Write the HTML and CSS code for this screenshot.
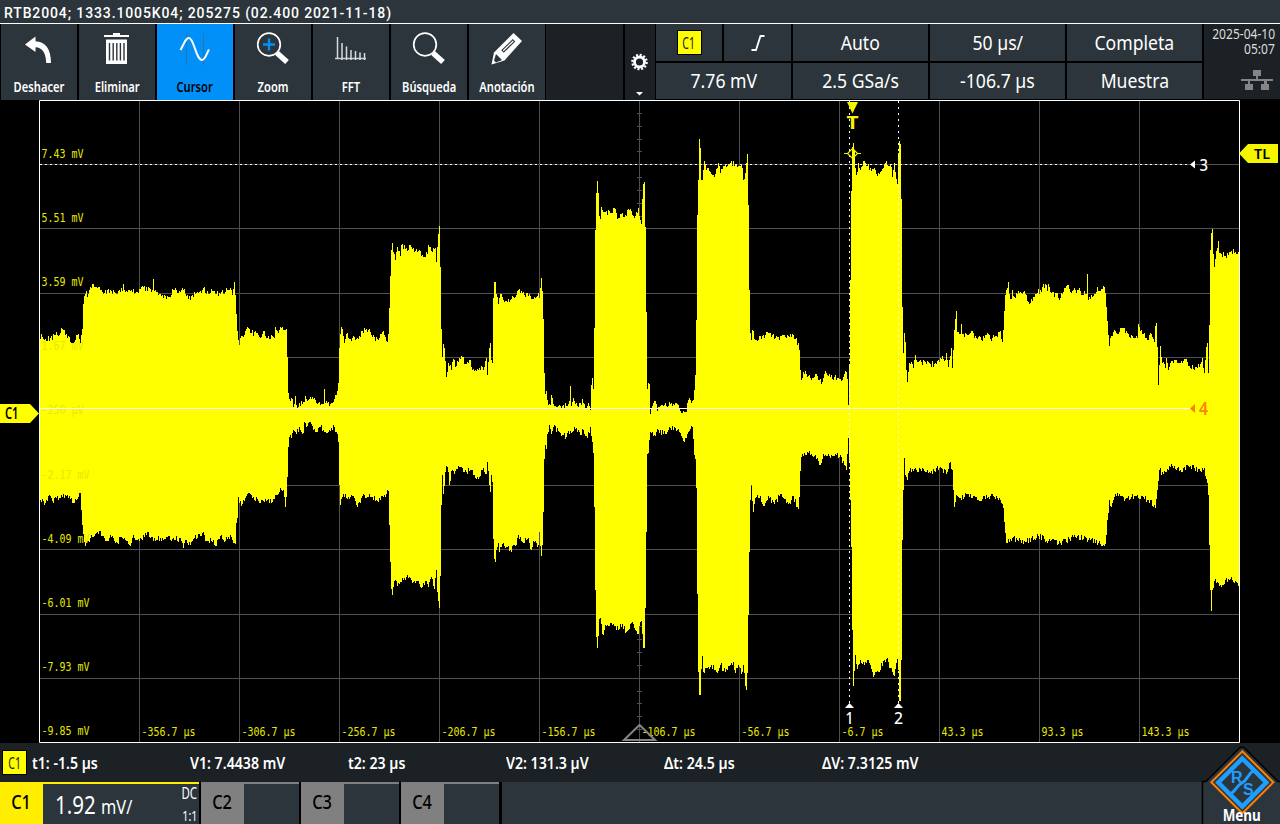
FILE: index.html
```html
<!DOCTYPE html>
<html lang="es">
<head>
<meta charset="utf-8">
<title>RTB2004</title>
<link rel="stylesheet" href="styles.css">
</head>
<body>
<div class="screen">
  <header class="title"><span>RTB2004; 1333.1005K04; 205275 (02.400 2021-11-18)</span></header>

  <nav class="toolbar">
    <div class="tool">
      <svg class="icon" viewBox="0 0 40 40"><path d="M6 17.5 16.5 9.5V14.2C26 14.5 32 21.500 32 36H27.200C27 26.500 23.500 20.500 16.500 20.300V25Z" fill="#fff"/></svg>
      <span>Deshacer</span>
    </div>
    <div class="tool">
      <svg class="icon" viewBox="0 0 40 40"><path d="M7 8h9V6h7v2h9v2H7zM9 12.500h21V37H9z" fill="#fff"/><path d="M12.500 16v17.500M16.200 16v17.500M19.800 16v17.500M23.400 16v17.500M27 16v17.500" stroke="#2b353b" stroke-width="1.400"/></svg>
      <span>Eliminar</span>
    </div>
    <div class="tool active">
      <svg class="icon" viewBox="0 0 40 40"><path d="M11.500 6.500v31M28.500 6.500v31" stroke="#4d5c66" stroke-dasharray="1 1" fill="none"/><path d="M5.500 23C9.500 16 10.500 11 14 11C19 11 21 33 27 33C30 33 31 28 34 22.500" stroke="#fff" stroke-width="2" fill="none"/></svg>
      <span>Cursor</span>
    </div>
    <div class="tool">
      <svg class="icon" viewBox="0 0 40 40"><circle cx="16" cy="17.500" r="11.300" fill="none" stroke="#fff" stroke-width="1.700"/><path d="m24 26 10 9" stroke="#fff" stroke-width="5.500"/><path d="M16 11.500v12M10 17.500h12" stroke="#0090f8" stroke-width="2.400"/></svg>
      <span>Zoom</span>
    </div>
    <div class="tool">
      <svg class="icon" viewBox="0 0 40 40"><path d="M4 31.500h31" stroke="#ccd0d2" stroke-width="1.500"/><path d="M6.500 10v22M11 16v17M15.500 19.500V33M20 23v10M24.500 24v9M29 25.500V33M33.500 26v7" stroke="#d8dcde" stroke-width="1.500"/></svg>
      <span>FFT</span>
    </div>
    <div class="tool">
      <svg class="icon" viewBox="0 0 40 40"><circle cx="16" cy="17.500" r="11.300" fill="none" stroke="#fff" stroke-width="1.700"/><path d="m24 26 10 9" stroke="#fff" stroke-width="5.500"/></svg>
      <span>Búsqueda</span>
    </div>
    <div class="tool">
      <svg class="icon" viewBox="0 0 40 40"><path d="M26.500 6 35 14 17.500 33.500 4.500 37.500 7 25.500Z" fill="#fff"/><path d="m9 27 6 6-6 2.500-2-2Z" fill="#2b353b"/><path d="M15.500 24.500 27 13.300" stroke="#2b353b" stroke-width="3.600"/><path d="M16.200 23.800 26.300 14" stroke="#fff" stroke-width="1.200"/></svg>
      <span>Anotación</span>
    </div>
    <div class="spacer"></div>
    <div class="gear">
      <svg viewBox="0 0 30 75"><circle cx="14.500" cy="38" r="5" fill="none" stroke="#fff" stroke-width="2.800"/><circle cx="14.500" cy="38" r="7.200" fill="none" stroke="#fff" stroke-width="2.200" stroke-dasharray="2 1.770"/><path d="M11 68h7l-3.500 3.500z" fill="#fff"/></svg>
    </div>
    <section class="status">
      <div class="pair">
        <div class="cell"><b class="badge"><i>C1</i></b></div>
        <div class="cell"><svg class="edge" viewBox="0 0 14 18"><path d="M.500 16H5L9.500 2H13.500" fill="none" stroke="#fff" stroke-width="1.800"/></svg></div>
      </div>
      <div class="cell"><span>Auto</span></div>
      <div class="cell"><span>50 µs/</span></div>
      <div class="cell"><span>Completa</span></div>
      <div class="cell"><span>7.76 mV</span></div>
      <div class="cell"><span>2.5 GSa/s</span></div>
      <div class="cell"><span>-106.7 µs</span></div>
      <div class="cell"><span>Muestra</span></div>
    </section>
    <aside class="clock">
      <span>2025-04-10</span>
      <span>05:07</span>
      <svg viewBox="0 0 32 20"><path d="M12 0h8v6h-3v3h15v2h-6v3h2v6h-8v-6h3v-3H9v3h3v6H4v-6h3v-3H0V9h15V6h-3z" fill="#858585"/></svg>
    </aside>
  </nav>

  <main class="plot">
    <svg id="plot" viewBox="0 100 1280 643" width="1280" height="643">
      <g id="grid" fill="#505050"></g>
      <path id="wave" fill="#ffff00"/>
      <g id="labels" class="axis"></g>
      <path d="M639.500 725 624 740h31z" fill="none" stroke="#858585" stroke-width="2"/>
      <path d="M39.500 100.500h1200v642H39.500z" fill="none" stroke="#fff"/>
      <path d="M40 164.500h1150" stroke="#fff" stroke-dasharray="2 3"/>
      <path d="M40 408.500h1150" stroke="#fff"/>
      <path d="M849.500 101v603M898.500 101v603" stroke="#fff" stroke-dasharray="2 4"/>
      <path d="M1190 164.500l5-4v8zM849.500 703l4.500 5h-9zM898.500 703l4.500 5h-9z" fill="#fff"/>
      <path d="M1190 408.500l5-4.500v9z" fill="#ff8000"/>
      <g class="marker">
        <text x="1199.500" y="171" textLength="8.500" lengthAdjust="spacingAndGlyphs">3</text>
        <text x="1199" y="415" textLength="9" lengthAdjust="spacingAndGlyphs" class="orange">4</text>
        <text x="845.500" y="724" textLength="8" lengthAdjust="spacingAndGlyphs">1</text>
        <text x="894" y="724" textLength="9" lengthAdjust="spacingAndGlyphs">2</text>
      </g>
      <path d="M847 102h11l-5.500 11.500z" fill="#f5f500"/>
      <text class="trig" x="846.500" y="129" textLength="12" lengthAdjust="spacingAndGlyphs">T</text>
      <path d="M852.500 148.500l5 5-5 5-5-5zM844 153.500h3.500M857.500 153.500h3.500" fill="none" stroke="#f5f500" stroke-width="1.200"/>
      <path d="M0 404h30l9 9.500-9 9.500H0z" fill="#ffff00"/>
      <text class="tag" x="5" y="419" textLength="13.500" lengthAdjust="spacingAndGlyphs">C1</text>
      <path d="M1239 153.500l9-9.500h30v19h-30z" fill="#f5f500"/>
      <text class="tag tl" x="1254" y="159" textLength="16" lengthAdjust="spacingAndGlyphs">TL</text>
    </svg>
  </main>

  <section class="readout">
    <b class="badge"><i>C1</i></b>
    <div><span>t1: -1.5 µs</span></div>
    <div><span>V1: 7.4438 mV</span></div>
    <div><span>t2: 23 µs</span></div>
    <div><span>V2: 131.3 µV</span></div>
    <div><span>Δt: 24.5 µs</span></div>
    <div><span>ΔV: 7.3125 mV</span></div>
  </section>

  <footer class="channels">
    <div class="chan on">
      <b><span>C1</span></b>
      <p><span class="scale">1.92 <small>mV/</small></span><span class="side"><i>DC</i><i class="probe">1:1</i></span></p>
    </div>
    <div class="chan"><b><span>C2</span></b><p></p></div>
    <div class="chan"><b><span>C3</span></b><p></p></div>
    <div class="chan"><b><span>C4</span></b><p></p></div>
    <div class="rest"></div>
    <div class="menu">
      <svg class="logo" viewBox="1200 744 80 80" width="80" height="80">
        <path d="M1202.500 826V781.500H1206L1239 748.500Q1242 746 1245 748.500L1278 781.500H1282V826z" fill="#2b353b" stroke="#000" stroke-width="1.500"/>
        <path d="M1242.300 751.300l31 31-31 31-31-31z" fill="none" stroke="#ff8000" stroke-width="2"/>
        <path d="M1242.300 758.500l24 24-24 24-24-24z" fill="none" stroke="#1e9eff" stroke-width="4.500"/>
        <path d="M1254 770.500C1247 774 1248 780 1242 783C1236 786 1237 790 1230.500 794" fill="none" stroke="#1e9eff" stroke-width="3"/>
        <text x="1231" y="783" class="rs">R</text>
        <text x="1243" y="794.500" class="rs">S</text>
      </svg>
      <span>Menu</span>
    </div>
  </footer>
</div>
<script src="plot.js"></script>
</body>
</html>
```
FILE: styles.css
```css
* { box-sizing: border-box; }
body { margin: 0; background: #000; color: #fff; font-family: "Noto Sans", "Open Sans", sans-serif; }
i { font-style: normal; }
.screen { width: 1280px; height: 824px; display: flex; flex-direction: column; overflow: hidden; background: #000; }

.title { height: 24px; flex: none; background: #2b353b; border-bottom: 1px solid #fff; padding-left: 4px; font: 500 14px/26px Roboto, sans-serif; white-space: pre; }
.title span { display: inline-block; letter-spacing: .88px; }

.toolbar { height: 76px; flex: none; display: flex; padding-left: 1px; }
.toolbar > * { flex-shrink: 0; }
.tool { width: 76px; height: 76px; margin-right: 2px; background: #2b353b; display: flex; flex-direction: column; align-items: center; }
.tool .icon { width: 40px; height: 40px; margin-top: 3px; }
.tool span { font-size: 14.5px; font-weight: 600; line-height: 20px; margin-top: 9px; transform: scaleX(.77); white-space: nowrap; }
.tool:nth-child(7) { margin-right: 1px; }
.tool.active { background: #0090f8; }
.tool.active span { color: #000; }
.spacer { width: 77px; margin-right: 2px; background: #1b2124; }
.gear { width: 30px; margin-right: 1px; background: #1b2124; }
.gear svg { display: block; width: 30px; height: 75px; }

.status { display: grid; grid-template-columns: repeat(4, 135px); grid-template-rows: 37px 36px; gap: 2px; }
.pair { display: grid; grid-template-columns: 66px 67px; gap: 2px; }
.cell { background: #2b353b; display: flex; align-items: center; justify-content: center; font-size: 20px; line-height: 36px; white-space: nowrap; }
.cell > span { transform: scaleX(.88); }
.edge { width: 14px; height: 18px; }
.badge { width: 25px; height: 25px; background: #ffff00; border: 1px solid #000; color: #222; display: flex; align-items: center; justify-content: center; font-weight: 400; font-size: 16px; }
.badge i { transform: scaleX(.65); }

.clock { width: 76px; margin-left: 2px; background: #1b2124; height: 75px; display: flex; flex-direction: column; align-items: flex-end; padding: 2px 5px 0 0; font-size: 14px; line-height: 15px; color: #ddd; }
.clock span { transform: scaleX(.86); transform-origin: right; white-space: nowrap; }
.clock svg { width: 32px; height: 20px; margin: 14px 2px 0 0; }

.plot { height: 643px; flex: none; }
.plot svg { display: block; }
.axis { font: 11.5px "DejaVu Sans Mono", monospace; fill: #e8e800; }
.marker { font-size: 17px; font-weight: 500; fill: #fff; }
.marker .orange { fill: #ff8000; font-weight: 600; }
.trig { font: 700 17px "Noto Sans", sans-serif; fill: #f5f500; }
.tag { font-size: 16px; font-weight: 600; fill: #000; }
.tl { font-size: 15px; }

.readout { height: 39px; flex: none; background: #1b2124; display: flex; align-items: center; padding-left: 2px; font-size: 16px; font-weight: 600; }
.readout .badge { margin-right: 5px; }
.readout div { width: 158px; white-space: nowrap; }
.readout span { display: inline-block; transform: scaleX(.885); transform-origin: left; }

.channels { height: 42px; flex: none; display: flex; }
.chan { width: 98px; margin-right: 2px; display: flex; border-top: 2px solid #808080; background: #2b353b; }
.chan b { width: 43px; height: 40px; background: #808080; color: #000; font-weight: 500; font-size: 20px; line-height: 36px; text-align: center; }
.chan b span { display: inline-block; transform: scaleX(.82); }
.chan p { flex: 1; margin: 0; display: flex; justify-content: space-between; }
.chan.on { width: 199px; border-color: #ffee00; }
.chan.on b { background: #ffee00; }
.scale { font-size: 25px; line-height: 40px; margin-left: 12px; transform: scaleX(.82); transform-origin: left; white-space: nowrap; }
.scale small { font-size: 20px; }
.side { display: flex; flex-direction: column; align-items: flex-end; padding-right: 2px; font-size: 15.5px; line-height: 22px; margin-top: -2px; }
.side i { transform: scaleX(.74); transform-origin: right; }
.side .probe { font-size: 14.5px; }
.rest { width: 701px; margin-left: 1px; background: #2b353b; }
.menu { position: relative; flex: 1; display: flex; align-items: flex-end; justify-content: center; }
.logo { position: absolute; right: 0; bottom: 0; }
.menu span { position: relative; font-size: 16px; font-weight: 700; line-height: 18px; transform: scaleX(.84); }
.rs { font: 700 16px "Liberation Sans", sans-serif; fill: #1e9eff; }
```
FILE: plot.js
```js
// Envelope of the captured signal, as x,y pairs in screen pixels.
const upper = `40,339 41,334 43,339 50,338 55,335 60,333 62,329 66,334 70,342 75,340 78,334 80,343 82,329 83,304 84,296 86,291 87,297 89,290 92,284 97,288 101,290 103,294 110,290 115,293 122,291 123,284 125,292 130,291 137,292 140,289 142,286 145,291 148,287 152,290 153,279 154,291 160,294 168,297 173,290 178,293 184,289 188,299 195,294 202,290 203,288 206,294 212,291 220,294 228,290 231,290 232,295 234,282 235,295 236,314 237,331 239,345 240,338 243,337 246,329 250,333 256,333 260,338 263,331 267,338 274,338 275,327 278,333 280,327 283,330 286,329 287,357 288,393 289,399 292,399 293,407 295,396 297,408 303,402 305,396 308,400 313,399 318,403 323,404 324,389 325,403 329,406 333,402 335,395 337,391 338,383 339,348 340,334 341,327 343,336 344,343 346,334 350,339 356,339 360,337 362,331 368,330 371,335 377,339 380,334 383,331 387,342 388,334 389,308 390,276 391,250 392,243 393,252 395,260 397,247 400,256 401,245 405,249 408,250 410,245 414,252 418,251 422,255 427,254 428,245 432,252 435,248 436,262 437,247 438,234 439,226 440,267 441,329 442,357 443,344 444,348 445,361 446,377 448,363 451,370 453,359 455,367 460,359 461,356 466,364 469,360 473,369 477,369 484,367 486,358 487,375 489,348 490,343 491,360 492,363 493,298 494,282 495,282 496,294 498,304 500,294 503,300 510,300 515,297 517,291 520,293 524,295 530,296 535,298 538,293 539,298 540,288 541,278 542,291 543,319 544,373 545,394 546,391 548,405 550,405 551,395 553,404 557,407 562,406 566,406 569,401 570,386 571,406 573,398 575,404 581,405 582,399 584,404 586,409 588,403 590,410 591,385 592,378 593,389 594,328 595,230 596,193 597,181 598,193 599,216 600,219 601,207 605,212 610,213 615,209 617,219 620,214 625,215 628,209 632,215 634,218 638,208 640,220 641,224 642,199 643,184 644,182 645,227 646,312 647,389 648,383 649,384 650,414 653,403 655,401 657,411 660,406 664,405 675,403 680,411 686,412 688,400 691,403 693,400 694,390 695,375 696,320 697,215 698,180 699,139 700,148 701,180 702,180 703,170 704,161 706,170 710,172 714,177 718,163 720,173 723,166 727,166 730,163 735,164 738,166 742,168 743,180 745,173 746,163 747,154 748,205 749,290 750,333 751,340 752,330 755,340 762,336 768,333 775,338 785,337 790,334 794,339 798,343 799,350 800,370 801,380 803,372 810,378 815,374 821,384 825,371 830,377 838,378 842,380 845,371 847,379 848,405 849,364 850,280 851,191 852,147 853,143 854,150 855,168 856,175 858,163 860,170 863,161 867,166 870,168 874,168 877,176 880,172 885,163 888,166 891,167 892,177 894,163 897,184 898,153 899,141 900,144 901,199 902,307 903,353 904,333 905,342 906,370 907,382 909,363 911,362 913,368 915,355 917,362 925,362 930,364 936,364 940,358 945,360 946,353 948,367 951,348 952,368 954,330 955,319 956,311 957,332 960,334 961,324 962,334 967,335 971,331 974,338 981,340 985,335 992,338 1000,331 1002,342 1003,330 1004,311 1005,295 1006,290 1008,282 1009,294 1011,299 1012,290 1014,297 1020,292 1024,291 1029,304 1035,294 1040,290 1045,284 1047,291 1048,284 1050,292 1060,298 1066,286 1072,291 1078,290 1085,294 1086,294 1087,274 1088,300 1095,294 1097,287 1100,291 1104,287 1105,293 1106,307 1107,321 1108,335 1109,346 1110,338 1113,332 1118,334 1121,328 1128,334 1134,338 1137,338 1138,324 1142,334 1148,340 1150,333 1154,342 1155,326 1156,323 1157,347 1158,385 1160,346 1162,363 1165,368 1166,358 1168,370 1172,361 1180,363 1185,359 1190,368 1197,368 1202,358 1204,373 1206,347 1207,343 1208,373 1209,325 1210,250 1211,233 1212,229 1213,254 1214,267 1216,251 1218,241 1219,253 1225,256 1230,252 1235,252 1239,254`;
const lower = `40,500 45,503 49,495 52,501 60,498 65,495 70,499 73,503 78,497 80,493 81,510 82,525 83,534 84,542 85,546 87,541 90,538 95,534 100,531 102,536 107,541 110,535 113,538 117,543 120,537 123,539 130,546 133,535 139,541 147,532 150,538 160,538 167,537 174,540 180,538 183,548 186,540 190,545 194,538 200,536 203,532 205,541 213,540 215,546 221,535 225,541 230,535 234,543 235,544 236,523 237,518 238,497 241,506 245,498 248,493 253,497 260,503 265,499 272,502 277,495 281,490 283,490 285,507 286,497 287,477 288,447 289,437 291,438 293,430 296,434 299,427 303,433 304,422 306,427 309,422 315,432 320,427 325,432 330,431 334,427 336,432 338,442 339,485 340,505 343,494 347,499 352,496 357,507 362,496 370,497 376,500 383,497 388,491 389,525 390,562 391,589 392,595 394,581 397,586 404,578 410,578 413,582 418,581 420,587 425,581 428,587 431,577 434,589 436,570 437,592 438,601 439,608 440,576 441,505 442,475 443,494 445,472 446,466 448,472 449,485 451,471 455,471 461,467 464,472 470,470 478,479 483,468 486,474 487,462 489,485 490,492 491,475 492,482 493,539 494,559 495,562 496,550 498,543 499,552 502,544 506,547 510,550 515,546 518,535 523,543 528,538 530,549 534,542 538,545 539,532 541,556 542,545 543,512 544,459 545,445 546,449 547,434 549,425 551,434 553,427 558,431 563,435 566,437 570,431 576,428 580,435 583,430 587,438 590,427 592,442 593,453 594,507 595,590 596,637 597,648 599,619 600,618 602,634 606,626 612,625 616,630 622,624 626,632 631,623 635,630 638,634 640,622 641,621 642,634 643,648 644,648 645,608 646,532 647,454 648,453 650,432 654,435 658,430 663,434 668,430 674,427 680,433 683,441 687,434 691,426 692,427 693,439 694,455 695,459 696,488 697,594 698,672 699,695 700,695 701,669 702,656 703,672 706,668 711,665 716,672 720,665 725,672 730,665 733,662 735,673 738,665 741,674 743,665 745,686 746,690 747,673 748,615 749,552 750,500 751,485 753,512 755,498 760,496 763,506 768,496 774,504 780,494 785,499 790,504 793,496 798,509 799,497 800,471 801,457 803,456 808,453 814,456 820,465 823,454 827,456 833,456 840,455 844,465 846,470 848,438 849,462 850,500 851,547 852,630 853,686 855,655 857,669 860,660 864,665 868,660 873,677 878,672 883,661 886,659 890,668 894,676 897,659 898,670 899,701 900,701 901,660 902,540 903,490 904,458 905,475 907,480 909,471 920,469 930,473 940,467 946,474 950,462 952,470 953,490 954,507 956,495 960,498 968,494 978,500 990,496 1000,500 1003,508 1004,522 1006,543 1012,538 1025,542 1038,536 1050,541 1060,543 1075,537 1090,540 1105,544 1107,520 1109,500 1111,507 1115,494 1125,499 1135,496 1148,500 1155,508 1157,490 1159,470 1163,474 1170,467 1180,470 1190,466 1200,471 1204,468 1207,483 1208,495 1209,545 1210,590 1211,611 1212,590 1214,581 1220,585 1228,579 1235,581 1239,586`;

const NS = 'http://www.w3.org/2000/svg';

// One value per pixel column; flat stretches get a small ripple.
function columns(source, seed) {
  const points = source.split(' ').map(p => p.split(',').map(Number));
  const out = [];
  let k = 0;
  for (let x = 40; x < 1239; x++) {
    while (points[k + 1][0] < x) k++;
    const [x0, y0] = points[k], [x1, y1] = points[k + 1];
    let y = y0 + (y1 - y0) * (x - x0) / (x1 - x0);
    seed = (seed * 1103515245 + 12345) % 2147483648;
    if (x !== x0 && x !== x1) y += (seed / 2147483648 - 0.5) * 6;
    out.push(Math.round(y));
  }
  return out;
}

const top_ = columns(upper, 7), bottom = columns(lower, 31);
document.getElementById('wave').setAttribute('d',
  top_.map((y, i) => `M${40 + i} ${y}h1V${bottom[i]}h-1z`).join(''));

const grid = document.getElementById('grid');
function bar(x, y, width, height) {
  const r = document.createElementNS(NS, 'rect');
  Object.entries({ x, y, width, height }).forEach(([n, v]) => r.setAttribute(n, v));
  grid.append(r);
}
for (let x = 139; x < 1239; x += 100) bar(x, 101, 1, 641);
for (const y of [164, 228, 293, 357, 421, 485, 549, 614, 678]) bar(40, y, 1199, 1);
for (let k = 1; k < 50; k++) bar(637, Math.floor(100.5 + k * 12.84), 5, 1);

const labels = document.getElementById('labels');
function label(text, x, y) {
  const t = document.createElementNS(NS, 'text');
  t.textContent = text;
  t.setAttribute('x', x);
  t.setAttribute('y', y);
  t.setAttribute('textLength', text.length * 6);
  t.setAttribute('lengthAdjust', 'spacingAndGlyphs');
  labels.append(t);
}
['7.43 mV', '5.51 mV', '3.59 mV', '1.67 mV', '-250 µV', '-2.17 mV', '-4.09 mV', '-6.01 mV', '-7.93 mV', '-9.85 mV']
  .forEach((t, i) => label(t, 41.5, Math.round(157.5 + i * 64.2)));
['-356.7 µs', '-306.7 µs', '-256.7 µs', '-206.7 µs', '-156.7 µs', '-106.7 µs', '-56.7 µs', '-6.7 µs', '43.3 µs', '93.3 µs', '143.3 µs']
  .forEach((t, i) => label(t, 141.5 + i * 100, 736));
```
